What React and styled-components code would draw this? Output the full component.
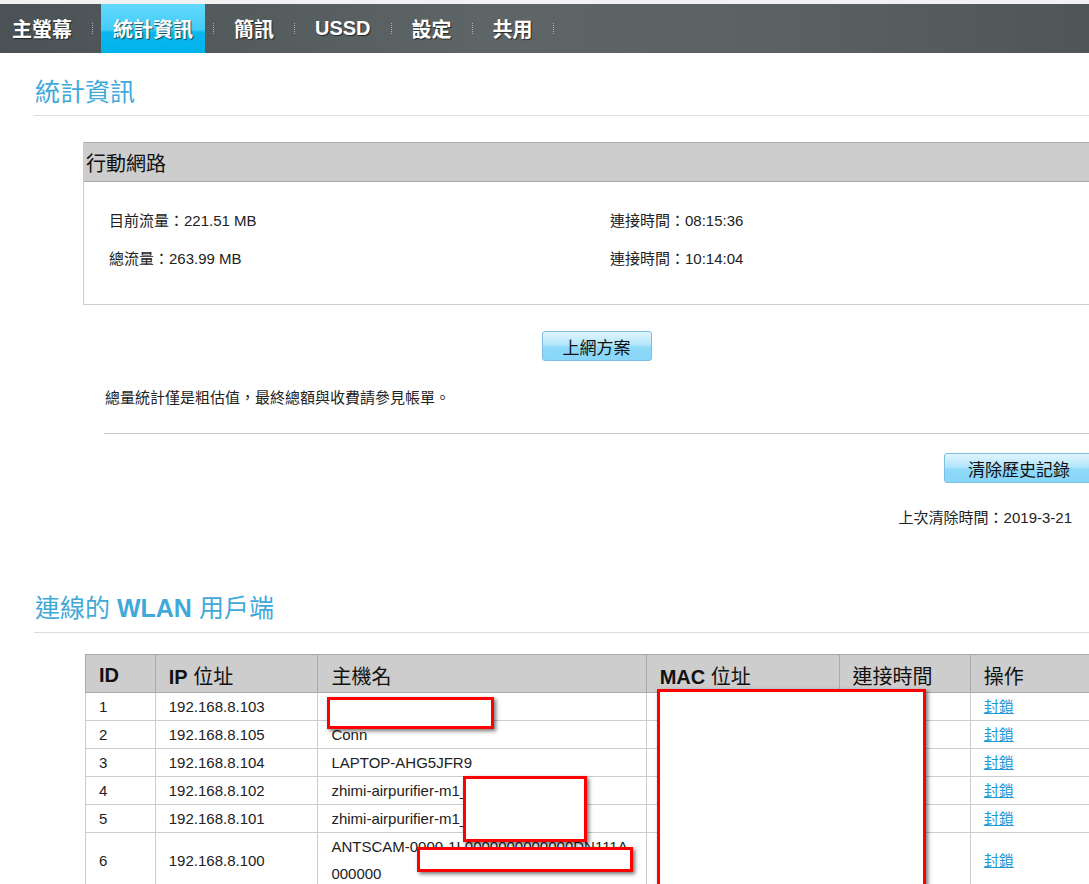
import styled, { createGlobalStyle } from "styled-components";

const GlobalStyle = createGlobalStyle`
  html, body {
    margin: 0;
    padding: 0;
    background: #fff;
    overflow-x: hidden;
  }
  body {
    font-family: "Liberation Sans", "Noto Sans CJK TC", sans-serif;
    color: #222;
  }
`;

const cjk = `"Liberation Sans", "Noto Sans CJK TC", sans-serif`;

const NavBar = styled.nav`
  display: flex;
  align-items: stretch;
  height: 49px;
  border-top: 4px solid #f1f1f1;
  background: linear-gradient(to right, #4b5255 0%, #5d6566 45%, #5a6263 70%, #4f5658 100%);
`;

const NavItem = styled.a`
  display: flex;
  align-items: center;
  padding: 0 12px;
  font-family: ${cjk};
  font-size: 20px;
  font-weight: bold;
  color: #fff;
  text-decoration: none;
  text-shadow: 1px 1px 1px rgba(0, 0, 0, 0.6);
  background: ${(p) =>
    p.$active
      ? "linear-gradient(#63d7fc 0%, #44cdf7 52%, #0cb6ec 58%, #00b3ec 100%)"
      : "transparent"};
`;

const NavSep = styled.span`
  align-self: center;
  width: 0;
  height: 11px;
  margin: 0 8px;
  border-left: 1px dotted #a9b0b2;
`;

const Main = styled.main`
  width: 1076px;
  margin-left: 34px;
`;

const SectionTitle = styled.h2`
  margin: ${(p) => p.$top}px 0 0;
  padding: 0 0 ${(p) => p.$pad}px 1px;
  font-family: ${cjk};
  font-size: 25px;
  line-height: 30px;
  font-weight: normal;
  color: #3fa9da;
  border-bottom: 1px solid #ddd;

  b {
    font-weight: bold;
  }
`;

const StatBox = styled.section`
  margin: 26px 0 0 49px;
  border: 1px solid #ccc;
  border-top: none;
`;

const StatHeader = styled.h3`
  margin: 0;
  height: 40px;
  box-sizing: border-box;
  padding-left: 2px;
  display: flex;
  align-items: center;
  background: #cdcdcd;
  border-top: 1px solid #aaa;
  border-bottom: 1px solid #aaa;
  font-family: ${cjk};
  font-size: 20px;
  font-weight: normal;
  color: #111;
`;

const StatGrid = styled.div`
  display: grid;
  grid-template-columns: 501px 1fr;
  padding: 20px 0 26px 25px;
`;

const StatItem = styled.div`
  font-size: 15px;
  line-height: 38px;
  color: #222;
`;

const ButtonRow = styled.div`
  display: flex;
  justify-content: ${(p) => p.$align || "center"};
  margin: ${(p) => p.$margin};
`;

const Button = styled.button`
  height: 30px;
  padding: 0 ${(p) => p.$pad || 20}px;
  font-family: ${cjk};
  font-size: 17px;
  color: #111;
  background: linear-gradient(#e2f5fd 0%, #b3e6fb 45%, #8fd9f9 55%, #88d6f8 100%);
  border: 1px solid #7cbfe2;
  border-radius: 3px;
  cursor: pointer;
`;

const Note = styled.p`
  margin: 27px 0 0 71px;
  font-size: 15px;
  line-height: 20px;
`;

const Divider = styled.hr`
  margin: 25px 0 0 70px;
  border: none;
  border-top: 1px solid #ccc;
`;

const LastCleared = styled.p`
  margin: 25px 0 0;
  padding-right: 38px;
  text-align: right;
  font-size: 15px;
  line-height: 20px;
`;

const TableWrap = styled.div`
  position: relative;
  margin: 21px 0 0 51px;
`;

const Table = styled.table`
  border-collapse: collapse;
  table-layout: fixed;
  border: 1px solid #ccc;
`;

const Th = styled.th`
  width: ${(p) => p.$w}px;
  height: 38px;
  padding: 3px 13px 0;
  box-sizing: border-box;
  text-align: left;
  font-family: ${cjk};
  font-size: 20px;
  font-weight: normal;
  color: #111;
  background: #cdcdcd;
  border: 1px solid #aaa;

  b {
    font-weight: bold;
  }
`;

const Td = styled.td`
  padding: 0 13px;
  font-size: 15px;
  line-height: 27px;
  color: #222;
  border: 1px solid #ccc;
  vertical-align: middle;
  white-space: nowrap;
  overflow: visible;
`;

const BlockLink = styled.a`
  color: #1f9ad4;
  text-decoration: underline;
  cursor: pointer;
`;

const Redact = styled.div`
  position: absolute;
  left: ${(p) => p.$x}px;
  top: ${(p) => p.$y}px;
  width: ${(p) => p.$w}px;
  height: ${(p) => p.$h}px;
  box-sizing: border-box;
  background: #fff;
  border: 3px solid #f00;
  box-shadow: 2px 2px 4px rgba(0, 0, 0, 0.55);
`;

const navItems = ["主螢幕", "統計資訊", "簡訊", "USSD", "設定", "共用"];

const columns = [
  { label: <b>ID</b>, w: 70 },
  { label: <><b>IP</b> 位址</>, w: 163 },
  { label: "主機名", w: 328 },
  { label: <><b>MAC</b> 位址</>, w: 194 },
  { label: "連接時間", w: 132 },
  { label: "操作", w: 140 },
];

const clients = [
  { id: 1, ip: "192.168.8.103", host: [""] },
  { id: 2, ip: "192.168.8.105", host: ["Conn"] },
  { id: 3, ip: "192.168.8.104", host: ["LAPTOP-AHG5JFR9"] },
  { id: 4, ip: "192.168.8.102", host: ["zhimi-airpurifier-m1_"] },
  { id: 5, ip: "192.168.8.101", host: ["zhimi-airpurifier-m1_"] },
  { id: 6, ip: "192.168.8.100", host: ["ANTSCAM-0000-1L0000000000000DN111A-", "000000"] },
];

const redactions = [
  { x: 242, y: 43, w: 167, h: 32 },
  { x: 378, y: 122, w: 124, h: 66 },
  { x: 332, y: 193, w: 216, h: 25 },
  { x: 572, y: 35, w: 269, h: 240 },
];

export default function App() {
  return (
    <>
      <GlobalStyle />
      <NavBar>
        {navItems.map((n) => (
          <span key={n} style={{ display: "contents" }}>
            <NavItem $active={n === "統計資訊"}>{n}</NavItem>
            <NavSep />
          </span>
        ))}
      </NavBar>
      <Main>
        <SectionTitle $top={24} $pad={8}>統計資訊</SectionTitle>

        <StatBox>
          <StatHeader>行動網路</StatHeader>
          <StatGrid>
            <StatItem>目前流量：221.51 MB</StatItem>
            <StatItem>連接時間：08:15:36</StatItem>
            <StatItem>總流量：263.99 MB</StatItem>
            <StatItem>連接時間：10:14:04</StatItem>
          </StatGrid>
        </StatBox>

        <ButtonRow $margin="26px 0 0 49px">
          <Button $pad={20}>上網方案</Button>
        </ButtonRow>

        <Note>總量統計僅是粗估值，最終總額與收費請參見帳單。</Note>
        <Divider />

        <ButtonRow $align="flex-end" $margin="19px 16px 0 0">
          <Button $pad={23}>清除歷史記錄</Button>
        </ButtonRow>

        <LastCleared>上次清除時間：2019-3-21</LastCleared>

        <SectionTitle $top={65} $pad={9}>
          連線的 <b>WLAN</b> 用戶端
        </SectionTitle>

        <TableWrap>
          <Table>
            <colgroup>
              {columns.map((c, i) => (
                <col key={i} style={{ width: c.w }} />
              ))}
            </colgroup>
            <thead>
              <tr>
                {columns.map((c, i) => (
                  <Th key={i} $w={c.w}>{c.label}</Th>
                ))}
              </tr>
            </thead>
            <tbody>
              {clients.map((c) => (
                <tr key={c.id}>
                  <Td>{c.id}</Td>
                  <Td>{c.ip}</Td>
                  <Td>
                    {c.host.map((line, i) => (
                      <span key={i}>
                        {i > 0 && <br />}
                        {line}
                      </span>
                    ))}
                  </Td>
                  <Td></Td>
                  <Td></Td>
                  <Td>
                    <BlockLink>封鎖</BlockLink>
                  </Td>
                </tr>
              ))}
            </tbody>
          </Table>
          {redactions.map((r, i) => (
            <Redact key={i} $x={r.x} $y={r.y} $w={r.w} $h={r.h} />
          ))}
        </TableWrap>
      </Main>
    </>
  );
}
